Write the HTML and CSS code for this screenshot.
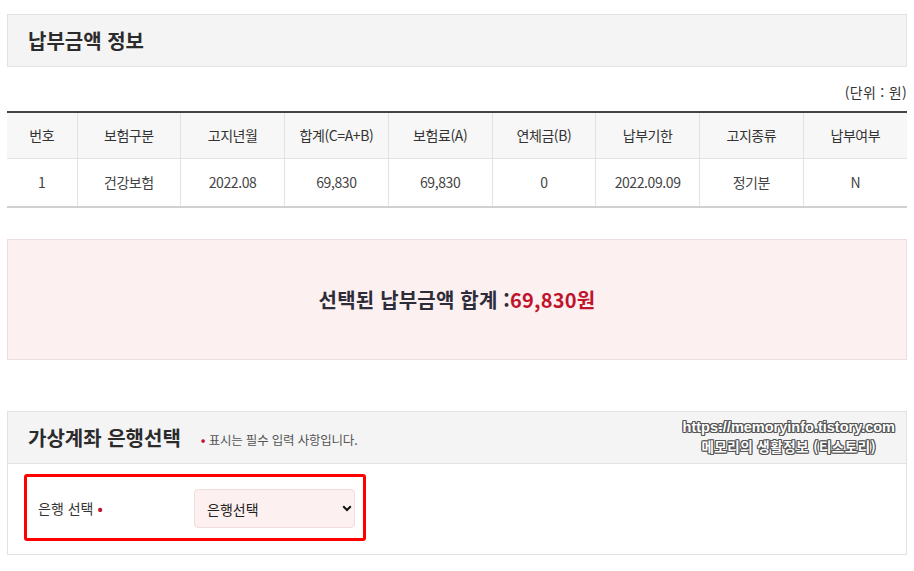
FILE: index.html
```html
<!DOCTYPE html>
<html lang="ko">
<head>
<meta charset="utf-8">
<link rel="stylesheet" href="styles.css">
</head>
<body>
<div class="page">
  <div class="sec-head"><h2 class="sec-title">납부금액 정보</h2></div>
  <div class="unit">(단위 : 원)</div>
  <table class="tbl">
    <colgroup>
      <col class="c-no"><col><col><col><col><col><col><col><col>
    </colgroup>
    <thead>
      <tr><th>번호</th><th>보험구분</th><th>고지년월</th><th>합계(C=A+B)</th><th>보험료(A)</th><th>연체금(B)</th><th>납부기한</th><th>고지종류</th><th>납부여부</th></tr>
    </thead>
    <tbody>
      <tr><td>1</td><td>건강보험</td><td>2022.08</td><td>69,830</td><td>69,830</td><td>0</td><td>2022.09.09</td><td>정기분</td><td>N</td></tr>
    </tbody>
  </table>
  <div class="total">
    <span class="total-label">선택된 납부금액 합계 :</span><span class="total-val">69,830원</span>
  </div>
  <div class="sec2">
    <div class="sec-head sec-head2">
      <h2 class="sec-title">가상계좌 은행선택</h2>
      <span class="note"><span class="dot">•</span> 표시는 필수 입력 사항입니다.</span>
      <div class="wm">
        <div class="wm-line wm-url">https://memoryinfo.tistory.com</div>
        <div class="wm-line wm-kr">메모리의 생활정보 (티스토리)</div>
      </div>
    </div>
    <div class="sec-body">
      <div class="mark">
        <div class="field">
          <label class="lbl">은행 선택 <span class="dot">•</span></label>
          <div class="sel-wrap">
            <select class="sel"><option>은행선택</option></select>
            <svg class="chev" width="10" height="7" viewBox="0 0 10 7"><path d="M1.2 1.2 L5 5 L8.8 1.2" fill="none" stroke="#111" stroke-width="2"/></svg>
          </div>
        </div>
      </div>
    </div>
  </div>
</div>
</body>
</html>
```
FILE: styles.css
```css
* { box-sizing: border-box; }
html, body { margin: 0; padding: 0; background: #fff; }
body {
  font-family: "Noto Sans CJK KR", "Noto Sans", sans-serif;
  color: #333;
}
.page { padding: 14px 7px 0 7px; width: 914px; }
.sec-head {
  height: 53px;
  background: #f4f4f4;
  border: 1px solid #e2e2e2;
  display: flex;
  align-items: center;
  padding-left: 20px;
  position: relative;
}
.sec-title {
  margin: 0;
  font-size: 20px;
  font-weight: 700;
  color: #2b2b2b;
  letter-spacing: 0;
}
.unit {
  text-align: right;
  font-size: 14px;
  color: #333;
  line-height: 20px;
  margin: 15px 0 9px;
  letter-spacing: 0.3px;
}
.tbl {
  width: 900px;
  border-collapse: collapse;
  table-layout: fixed;
  border-top: 2px solid #444;
  border-bottom: 2px solid #d0d0d0;
}
.c-no { width: 70px; }
.tbl th, .tbl td {
  font-size: 14px;
  font-weight: 400;
  text-align: center;
  border-left: 1px solid #e2e2e2;
  letter-spacing: -0.4px;
}
.tbl th:first-child, .tbl td:first-child { border-left: none; }
.tbl th {
  background: #f7f7f7;
  height: 46px;
  color: #333;
  border-bottom: 1px solid #e2e2e2;
}
.tbl td { height: 49px; color: #444; }
.total {
  margin-top: 31px;
  height: 121px;
  background: #fdf0f0;
  border: 1px solid #ecdede;
  display: flex;
  align-items: center;
  justify-content: center;
  font-size: 20px;
  font-weight: 700;
  letter-spacing: 0.2px;
}
.total-label { color: #2d2d3a; }
.total-val { color: #c0142d; }
.sec2 { margin-top: 51px; }
.sec-head2 { height: 53px; }
.note {
  font-size: 12.5px;
  color: #555;
  margin-left: 20px;
  margin-top: 3px;
  letter-spacing: -0.2px;
}
.dot { color: #c0142d; font-weight: 700; }
.wm {
  position: absolute;
  right: 11px;
  top: 7px;
  text-align: center;
  font-weight: 700;
  color: #fff;
  text-shadow: 1px 0 0 #555, -1px 0 0 #555, 0 1px 0 #555, 0 -1px 0 #555,
               1px 1px 0 #555, -1px -1px 0 #555, 1px -1px 0 #555, -1px 1px 0 #555;
}
.wm-url {
  font-family: "Liberation Sans", sans-serif;
  font-size: 14.5px;
  line-height: 17px;
  height: 17px;
}
.wm-kr {
  font-size: 13.5px;
  line-height: 18px;
  height: 18px;
  margin-top: 1px;
  letter-spacing: 0.5px;
}
.sec-body {
  border: 1px solid #e2e2e2;
  border-top: none;
  height: 91px;
  padding: 10px 0 0 16px;
}
.mark {
  width: 342px;
  height: 67px;
  border: 3px solid #f00;
  border-radius: 3px;
  display: flex;
  align-items: center;
}
.field { display: flex; align-items: center; padding-left: 11px; }
.lbl {
  font-size: 14px;
  color: #333;
  width: 156px;
}
.sel-wrap { position: relative; }
.sel {
  appearance: none;
  -webkit-appearance: none;
  width: 161px;
  height: 39px;
  background: #fdf0f0;
  border: 1px solid #f0dcdc;
  border-radius: 4px;
  font-family: "Noto Sans CJK KR", sans-serif;
  font-size: 14px;
  color: #222;
  padding: 0 12px;
  margin-top: 2px;
}
.chev { position: absolute; right: 3px; top: 18px; }
```
